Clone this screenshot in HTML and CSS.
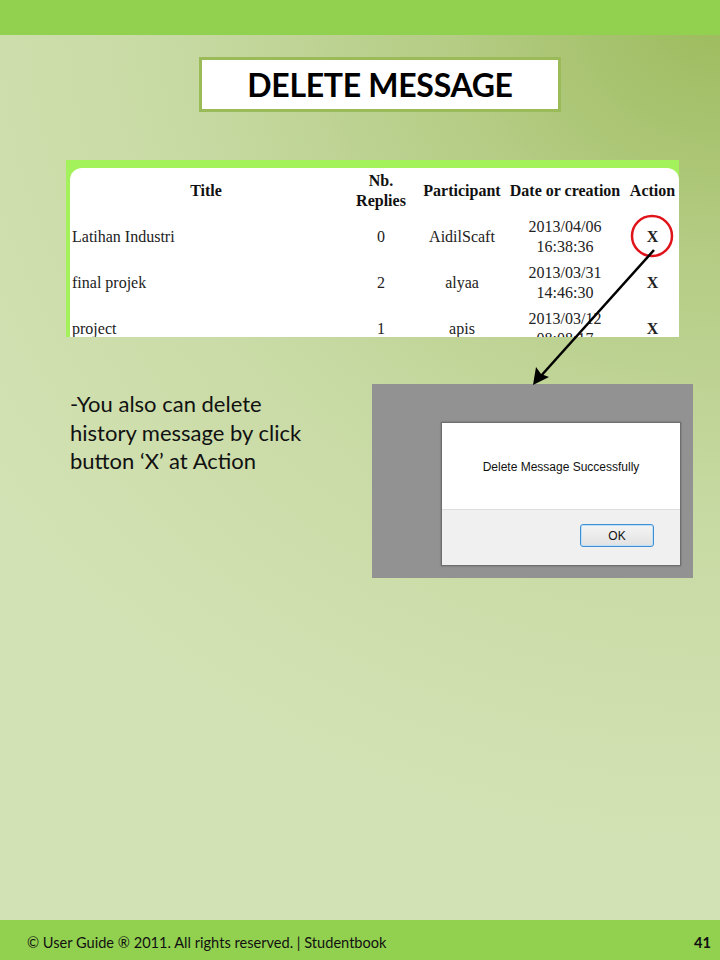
FILE: index.html
```html
<!DOCTYPE html>
<html>
<head>
<meta charset="utf-8">
<link rel="stylesheet" href="styles.css">
</head>
<body>
<div class="slide">
  <div class="topbar"></div>
  <main class="content">
    <div class="title-box"><h1>DELETE MESSAGE</h1></div>
    <div class="shot">
      <div class="shot-inner">
        <table class="msgs">
          <colgroup>
            <col class="c-title"><col class="c-nb"><col class="c-part"><col class="c-date"><col class="c-act">
          </colgroup>
          <thead>
            <tr><th>Title</th><th>Nb.<br>Replies</th><th>Participant</th><th>Date or creation</th><th>Action</th></tr>
          </thead>
          <tbody>
            <tr><td class="t">Latihan Industri</td><td>0</td><td>AidilScaft</td><td>2013/04/06<br>16:38:36</td><td class="x">X</td></tr>
            <tr><td class="t">final projek</td><td>2</td><td>alyaa</td><td>2013/03/31<br>14:46:30</td><td class="x">X</td></tr>
            <tr><td class="t">project</td><td>1</td><td>apis</td><td>2013/03/12<br>08:08:17</td><td class="x">X</td></tr>
          </tbody>
        </table>
      </div>
    </div>
    <div class="lower">
      <p class="note">-You also can delete<br>history message by click<br>button ‘X’ at Action</p>
      <div class="alert-shot">
        <div class="alert">
          <div class="alert-body">Delete Message Successfully</div>
          <div class="alert-foot"><span class="ok">OK</span></div>
        </div>
      </div>
    </div>
  </main>
  <footer class="footer">
    <span>© User Guide ® 2011. All rights reserved. | Studentbook</span>
    <span class="page">41</span>
  </footer>
  <svg class="overlay" width="720" height="960" viewBox="0 0 720 960">
    <circle cx="652" cy="236" r="20" fill="none" stroke="#e0151b" stroke-width="2.5"/>
    <line x1="654" y1="250" x2="540" y2="377" stroke="#000" stroke-width="2.5"/>
    <path d="M533 385 L536 367 L541 374 L549 377 Z" fill="#000"/>
  </svg>
</div>
</body>
</html>
```
FILE: styles.css
```css
html, body {
  margin: 0;
  padding: 0;
}
.slide {
  position: relative;
  width: 720px;
  height: 960px;
  display: flex;
  flex-direction: column;
  overflow: hidden;
  background: radial-gradient(ellipse 900px 850px at 100% 0%, #9cba5b 0%, #b4cc84 30%, #c8daa4 62%, #d3e2b4 100%);
}
.topbar {
  height: 35px;
  background: #92d050;
  flex: none;
}
.content {
  flex: 1;
  display: flex;
  flex-direction: column;
}
.title-box {
  margin: 22px 0 0 199px;
  width: 356px;
  height: 49px;
  border: 3px solid #9bbb59;
  background: #fff;
  display: flex;
  align-items: center;
  justify-content: center;
}
.title-box h1 {
  margin: 0;
  font-family: Lato, "Open Sans", sans-serif;
  font-weight: 700;
  font-size: 32px;
  color: #000;
  letter-spacing: -0.3px;
}
.shot {
  margin: 48px 0 0 66px;
  width: 613px;
  height: 177px;
  background: #a4f25b;
  padding: 8px 0 0 4px;
  box-sizing: border-box;
  overflow: hidden;
}
.shot-inner {
  background: #fff;
  border-radius: 12px 12px 0 0;
  height: 100%;
  overflow: hidden;
}
.msgs {
  table-layout: fixed;
  width: 609px;
  border-collapse: collapse;
  font-family: "Liberation Serif", serif;
  font-size: 16px;
  color: #222;
}
.c-title { width: 272px; }
.c-nb { width: 78px; }
.c-part { width: 84px; }
.c-date { width: 122px; }
.c-act { width: 53px; }
.msgs th {
  font-weight: 700;
  color: #111;
  height: 46px;
  line-height: 20px;
  padding: 0;
  text-align: center;
  vertical-align: middle;
}
.msgs td {
  height: 46px;
  line-height: 20px;
  padding: 0;
  text-align: center;
  vertical-align: middle;
}
.msgs td.t {
  text-align: left;
  padding-left: 2px;
}
.msgs td.x {
  font-weight: 700;
  font-size: 16px;
  color: #222;
}
.lower {
  display: flex;
  margin-top: 47px;
}
.note {
  margin: 6px 0 0 70px;
  width: 302px;
  font-family: Lato, "Open Sans", sans-serif;
  font-size: 22px;
  line-height: 28.5px;
  color: #111;
}
.alert-shot {
  margin-left: 0;
  width: 321px;
  height: 194px;
  background: #929292;
  box-sizing: border-box;
  padding: 38px 12px 12px 69px;
}
.alert {
  width: 240px;
  height: 144px;
  box-sizing: border-box;
  border: 1px solid #6e6e6e;
  background: #fff;
  display: flex;
  flex-direction: column;
  box-shadow: 0 0 2px rgba(0,0,0,0.3);
}
.alert-body {
  height: 86px;
  display: flex;
  align-items: center;
  justify-content: center;
  padding-top: 2px;
  box-sizing: border-box;
  font-family: "Liberation Sans", Arial, sans-serif;
  font-size: 12px;
  color: #111;
}
.alert-foot {
  flex: 1;
  background: #f0f0f0;
  border-top: 1px solid #dedede;
  display: flex;
  justify-content: flex-end;
  align-items: flex-start;
  padding: 14px 26px 0 0;
}
.ok {
  width: 74px;
  height: 23px;
  box-sizing: border-box;
  border: 1px solid #3c8fd4;
  border-radius: 3px;
  background: linear-gradient(#f4f4f4, #e2e2e2);
  box-shadow: inset 0 0 0 1px #bfe0f7;
  font-family: "Liberation Sans", Arial, sans-serif;
  font-size: 12px;
  color: #111;
  display: flex;
  align-items: center;
  justify-content: center;
}
.footer {
  flex: none;
  height: 40px;
  background: #92d050;
  display: flex;
  align-items: center;
  justify-content: space-between;
  padding: 4px 9px 0 27px;
  box-sizing: border-box;
  font-family: Lato, "Open Sans", sans-serif;
  font-size: 14.6px;
  color: #111;
}
.footer .page {
  font-weight: 700;
}
.overlay {
  position: absolute;
  left: 0;
  top: 0;
  pointer-events: none;
}
```
